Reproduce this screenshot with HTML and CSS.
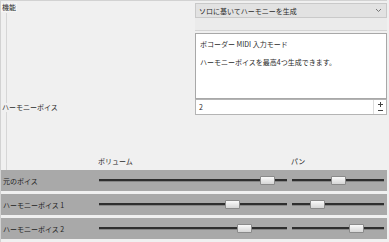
FILE: index.html
```html
<!DOCTYPE html>
<html lang="ja">
<head>
    <meta charset="UTF-8">
    <title>ハーモニー</title>
    <link rel="stylesheet" href="styles.css">
</head>
<body>
    <div class="window">
        <div class="settings">
            <div class="guide"></div>
            <label class="caption cap-mode">機能</label>
            <div class="select">
                <span>ソロに基いてハーモニーを生成</span>
                <svg class="chev" width="7" height="5" viewBox="0 0 7 5"><path d="M1 1 L3.5 3.5 L6 1" fill="none" stroke="#777" stroke-width="1"/></svg>
            </div>
            <div class="select-band"></div>
            <div class="desc">ボコーダー MIDI 入力モード<br><br>ハーモニーボイスを最高4つ生成できます。</div>
            <label class="caption cap-voices">ハーモニーボイス</label>
            <div class="spin">
                <span>2</span>
                <div class="spin-btns">
                    <svg width="7" height="5" viewBox="0 0 7 5"><path d="M1 2.5 H6 M3.5 0 V5" stroke="#444" stroke-width="1"/></svg>
                    <svg width="7" height="3" viewBox="0 0 7 3"><path d="M1 1.5 H6" stroke="#444" stroke-width="1"/></svg>
                </div>
            </div>
            <div class="heads">
                <span></span>
                <span>ボリューム</span>
                <span>パン</span>
            </div>
        </div>

        <div class="mixer">
            <div class="mix-row">
                <span class="mix-label">元のボイス</span>
                <div class="track"><div class="thumb" style="left:161px"></div></div>
                <div class="track"><div class="thumb" style="left:39px"></div></div>
            </div>
            <div class="mix-row">
                <span class="mix-label">ハーモニーボイス 1</span>
                <div class="track"><div class="thumb" style="left:126px"></div></div>
                <div class="track"><div class="thumb" style="left:18px"></div></div>
            </div>
            <div class="mix-row">
                <span class="mix-label">ハーモニーボイス 2</span>
                <div class="track"><div class="thumb" style="left:138px"></div></div>
                <div class="track"><div class="thumb" style="left:57px"></div></div>
            </div>
        </div>
    </div>
</body>
</html>
```

FILE: styles.css
```css
body {
    margin: 0;
    background-color: #f0f0f0;
    font-family: "Noto Sans CJK JP", "Noto Sans", sans-serif;
    font-size: 7px;
    color: #2a2a2a;
}
.window {
    width: 387px;
    height: 242px;
    border-top: 1px solid #d2d2d2;
    border-left: 1px solid #d2d2d2;
    box-sizing: border-box;
}

/* top form */
.settings {
    display: grid;
    grid-template-columns: 194px 192px;
    grid-template-rows: 17px 15px 66px 16px 55px;
}
.guide {
    grid-column: 1;
    grid-row: 1 / 6;
    margin: 12px 0 0 5px;
    border-left: 1px solid #d6d6d6;
}
.caption {
    grid-column: 1;
    justify-self: start;
    position: relative;
    line-height: 9px;
    padding: 0 1px;
}
.cap-mode {
    grid-row: 1;
    align-self: start;
    margin-top: 2px;
    background-color: #f6f6f6;
}
.cap-voices {
    grid-row: 4;
    align-self: center;
    background-color: #f0f0f0;
}
.select {
    grid-column: 2;
    grid-row: 1;
    margin-top: 2px;
    height: 15px;
    box-sizing: border-box;
    background-color: #e2e2e2;
    border: 1px solid #c9c9c9;
    padding: 0 4px 0 3px;
    display: flex;
    justify-content: space-between;
    align-items: center;
}
.select-band {
    grid-column: 2;
    grid-row: 2;
    background-color: #ebebeb;
    border-bottom: 1px solid #d4d4d4;
    margin-bottom: 2px;
}
.desc {
    grid-column: 2;
    grid-row: 3;
    background-color: #fff;
    border: 1px solid #a8a8a8;
    padding: 6px 4px;
    line-height: 9px;
}
.spin {
    grid-column: 2;
    grid-row: 4;
    background-color: #fff;
    border: 1px solid #b4b4b4;
    display: flex;
    justify-content: space-between;
    align-items: center;
    padding-left: 3px;
}
.spin-btns {
    display: flex;
    flex-direction: column;
    justify-content: center;
    align-items: center;
    gap: 2px;
    width: 12px;
    align-self: stretch;
    border-left: 1px solid #dcdcdc;
}
.spin-btns svg {
    display: block;
}
.heads {
    grid-column: 1 / 3;
    grid-row: 5;
    align-self: end;
    display: grid;
    grid-template-columns: 97px 193px 1fr;
    padding-bottom: 4px;
    line-height: 9px;
}

/* mixer rows */
.mixer {
    display: flex;
    flex-direction: column;
    gap: 3px;
}
.mix-row {
    height: 21px;
    background-color: #a9a9a9;
    display: grid;
    grid-template-columns: 93px 188px 92px;
    column-gap: 5px;
    align-items: center;
    padding-right: 3px;
}
.mix-label {
    padding-left: 2px;
    color: #222;
    white-space: nowrap;
}
.track {
    position: relative;
    height: 3px;
    box-sizing: border-box;
    border-top: 2px solid #2e2e2e;
    border-bottom: 1px solid #858585;
}
.thumb {
    position: absolute;
    top: -5px;
    width: 15px;
    height: 9px;
    box-sizing: border-box;
    border: 1px solid #8a8a8a;
    border-radius: 1px;
    background: linear-gradient(#fafafa, #d6d6d6);
}
```
